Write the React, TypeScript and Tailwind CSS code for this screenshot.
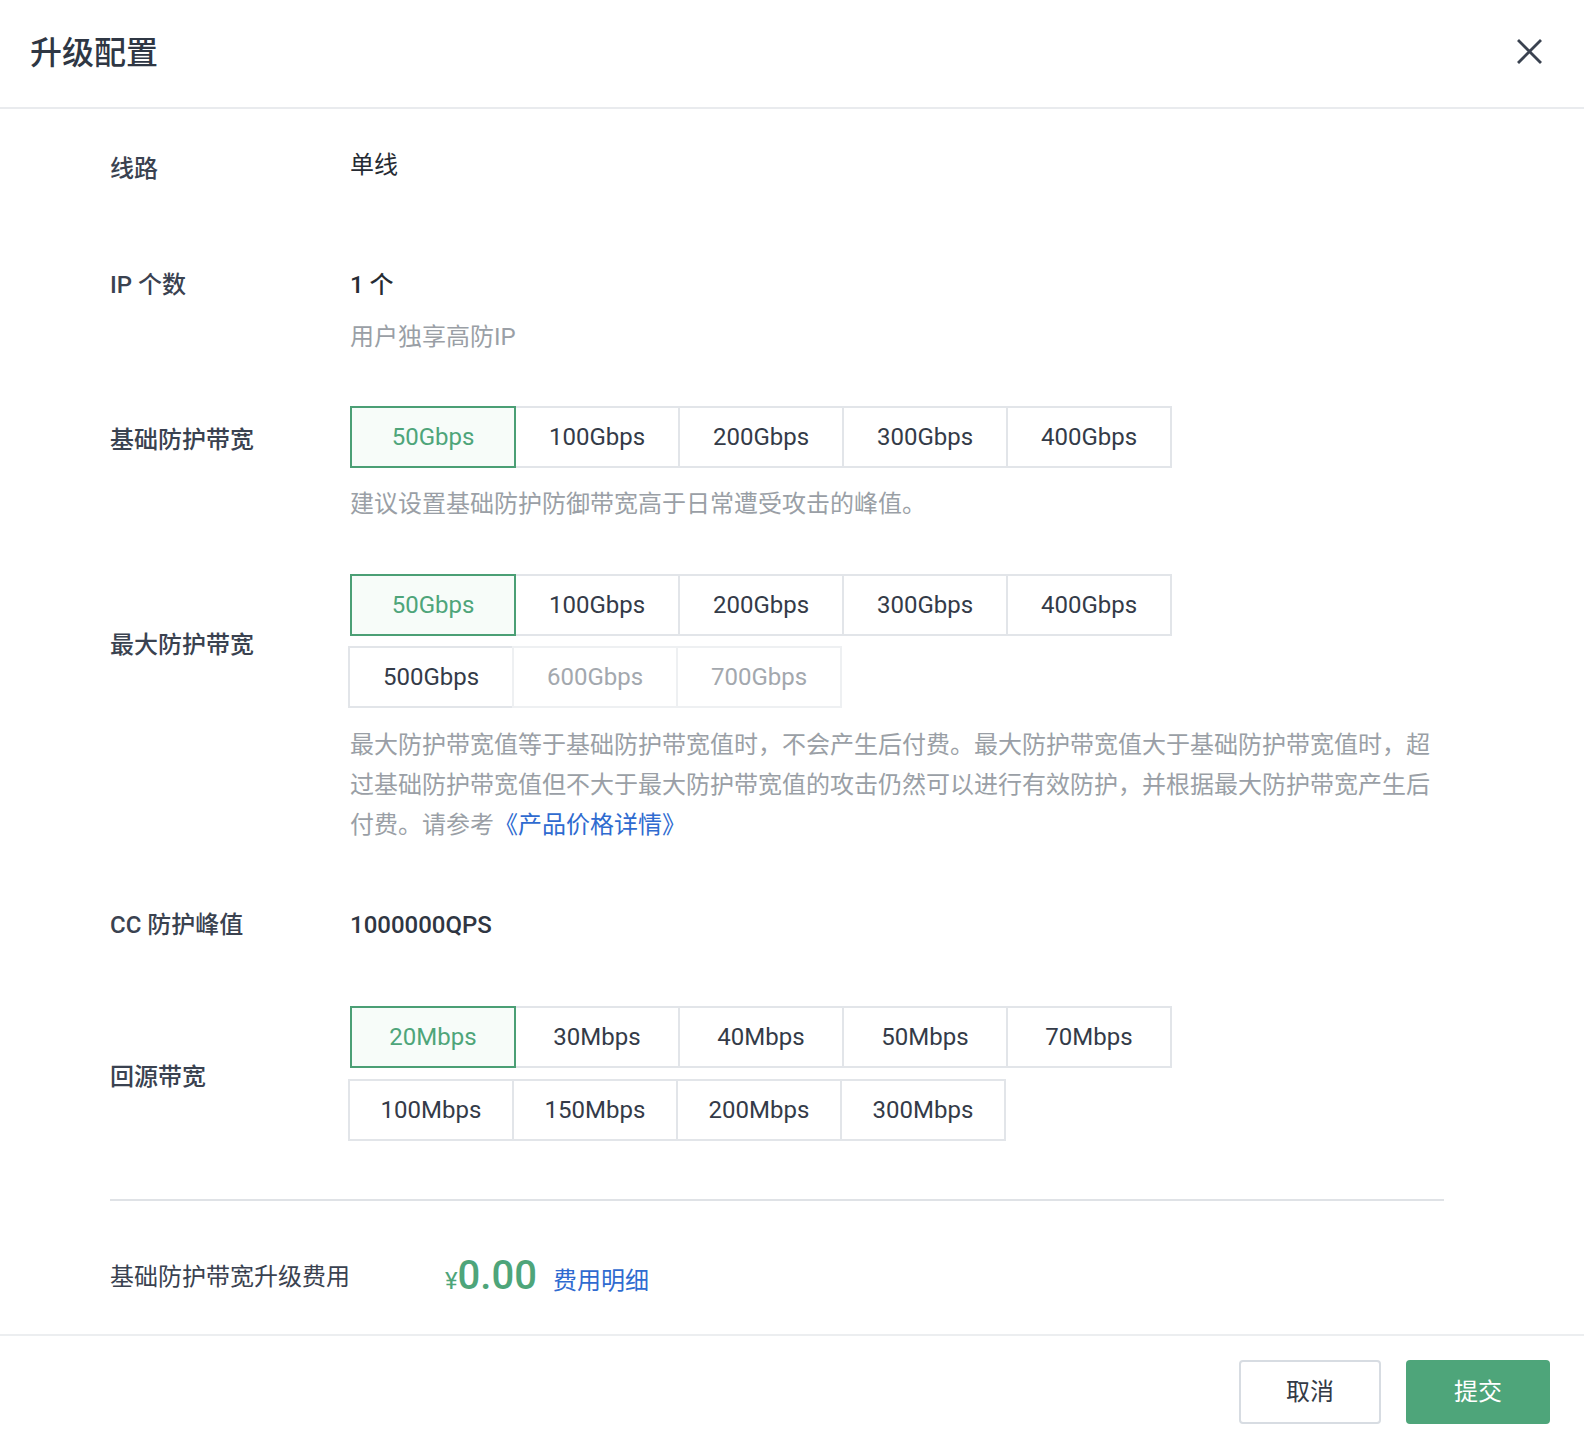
import React from 'react';

const font = '[font-family:Roboto,"Noto_Sans_CJK_SC",sans-serif]';

interface OptionProps {
  label: string;
  selected?: boolean;
  disabled?: boolean;
}

function Option({ label, selected, disabled }: OptionProps) {
  const base = 'relative -ml-[2px] first:ml-0 flex h-[62px] w-[166px] items-center justify-center border-2 text-[24px]';
  if (selected) {
    return <div className={`${base} z-10 border-[#4b9f75] bg-[#f7fcf9] text-[#4ea57a]`}>{label}</div>;
  }
  if (disabled) {
    return <div className={`${base} border-[#eef0f2] bg-white text-[#a3a8ae]`}>{label}</div>;
  }
  return <div className={`${base} border-[#e2e5e9] bg-white text-[#343b48]`}>{label}</div>;
}

function OptionRow({ items, selected, disabled = [], shift }: { items: string[]; selected?: string; disabled?: string[]; shift?: boolean }) {
  return (
    <div className={`flex ${shift ? '-ml-[2px]' : ''}`}>
      {items.map((it) => (
        <Option key={it} label={it} selected={it === selected} disabled={disabled.includes(it)} />
      ))}
    </div>
  );
}

export default function App() {
  return (
    <div className={`${font} h-[1442px] w-[1584px] overflow-hidden bg-white text-[#2f3642]`}>
      {/* header */}
      <div className="flex h-[109px] items-center justify-between border-b-2 border-[#e9ebee] pl-[30px] pr-[42px]">
        <h1 className="-mt-[2px] text-[32px] font-medium text-[#2f3744]">升级配置</h1>
        <svg width="25" height="25" viewBox="0 0 25 25" className="-mt-[4px]">
          <path d="M2 2 L23 23 M23 2 L2 23" stroke="#3a4250" strokeWidth="2.8" strokeLinecap="square" />
        </svg>
      </div>

      <div className="pl-[110px] pr-[140px]">
        {/* 线路 */}
        <div className="mt-[36px] flex">
          <div className="mt-[4px] w-[240px] text-[24px] leading-[40px] font-medium text-[#3a4250]">线路</div>
          <div className="text-[24px] leading-[40px] text-[#262b33]">单线</div>
        </div>

        {/* IP 个数 */}
        <div className="mt-[76px] flex">
          <div className="w-[240px] text-[24px] leading-[40px] font-medium text-[#3a4250]">IP 个数</div>
          <div>
            <div className="text-[24px] leading-[40px] font-medium text-[#262b33]">1 个</div>
            <div className="mt-[12px] text-[24px] leading-[40px] text-[#9a9fa6]">用户独享高防IP</div>
          </div>
        </div>

        {/* 基础防护带宽 */}
        <div className="mt-[49px] flex">
          <div className="mt-[14px] w-[240px] text-[24px] leading-[40px] font-medium text-[#3a4250]">基础防护带宽</div>
          <div>
            <OptionRow items={['50Gbps', '100Gbps', '200Gbps', '300Gbps', '400Gbps']} selected="50Gbps" />
            <div className="mt-[16px] text-[24px] leading-[40px] text-[#9a9fa6]">建议设置基础防护防御带宽高于日常遭受攻击的峰值。</div>
          </div>
        </div>

        {/* 最大防护带宽 */}
        <div className="mt-[50px] flex">
          <div className="mt-[51px] w-[240px] shrink-0 text-[24px] leading-[40px] font-medium text-[#3a4250]">最大防护带宽</div>
          <div className="flex-1">
            <OptionRow items={['50Gbps', '100Gbps', '200Gbps', '300Gbps', '400Gbps']} selected="50Gbps" />
            <div className="mt-[10px]">
              <OptionRow items={['500Gbps', '600Gbps', '700Gbps']} disabled={['600Gbps', '700Gbps']} shift />
            </div>
            <p className="mt-[17px] max-w-[1090px] text-[24px] leading-[40px] text-[#9a9fa6]">
              最大防护带宽值等于基础防护带宽值时，不会产生后付费。最大防护带宽值大于基础防护带宽值时，超过基础防护带宽值但不大于最大防护带宽值的攻击仍然可以进行有效防护，并根据最大防护带宽产生后付费。请参考<a className="text-[#2f6bd0]">《产品价格详情》</a>
            </p>
          </div>
        </div>

        {/* CC 防护峰值 */}
        <div className="mt-[60px] flex">
          <div className="w-[240px] text-[24px] leading-[40px] font-medium text-[#3a4250]">CC 防护峰值</div>
          <div className="text-[24px] leading-[40px] font-medium text-[#2f3642]">1000000QPS</div>
        </div>

        {/* 回源带宽 */}
        <div className="mt-[61px] flex">
          <div className="mt-[51px] w-[240px] text-[24px] leading-[40px] font-medium text-[#3a4250]">回源带宽</div>
          <div>
            <OptionRow items={['20Mbps', '30Mbps', '40Mbps', '50Mbps', '70Mbps']} selected="20Mbps" />
            <div className="mt-[11px]">
              <OptionRow items={['100Mbps', '150Mbps', '200Mbps', '300Mbps']} shift />
            </div>
          </div>
        </div>

        <div className="mt-[58px] h-[2px] w-[1334px] bg-[#dfe2e6]" />

        {/* 费用 */}
        <div className="mt-[52px] flex items-center">
          <div className="w-[335px] text-[24px] leading-[40px] text-[#3a4250]">基础防护带宽升级费用</div>
          <div className="flex items-baseline text-[#4ea57a]">
            <span className="text-[24px]">¥</span>
            <span className="text-[40px] leading-[40px] font-medium">0.00</span>
          </div>
          <a className="ml-[16px] mt-[8px] text-[24px] leading-[40px] text-[#2f6bd0]">费用明细</a>
        </div>
      </div>

      {/* footer */}
      <div className="mt-[33px] flex justify-end gap-[25px] border-t-2 border-[#eceef0] pr-[34px] pt-[24px]">
        <button className="flex h-[64px] w-[142px] items-center justify-center rounded-[4px] border-2 border-[#d7dce2] bg-white text-[24px] text-[#333a46]">取消</button>
        <button className="flex h-[64px] w-[144px] items-center justify-center rounded-[4px] bg-[#4ea57a] text-[24px] text-white">提交</button>
      </div>
    </div>
  );
}
